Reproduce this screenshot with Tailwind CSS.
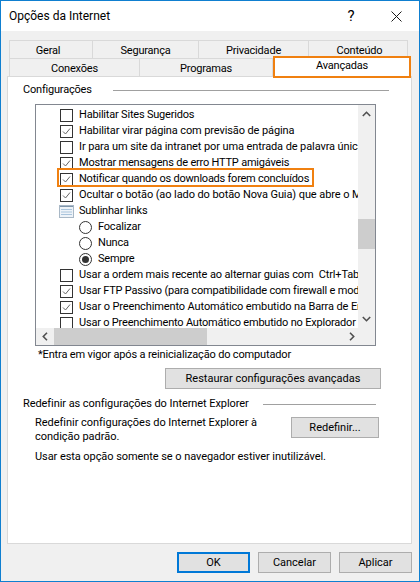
<!DOCTYPE html>
<html lang="pt-BR">
<head>
<meta charset="UTF-8">
<title>Opções da Internet</title>
<script src="https://cdn.jsdelivr.net/npm/@tailwindcss/browser@4"></script>
</head>
<body class="bg-white">
<div class="w-[420px] h-[582px] border border-[#0f7fd0] bg-[#f0f0f0] flex flex-col relative overflow-hidden font-['Roboto',sans-serif] text-[11px] leading-[16px] tracking-[-0.2px] text-black">

  <!-- title bar -->
  <div class="h-[30px] shrink-0 bg-white flex items-center pl-[8px]">
    <span class="flex-1 text-[12px] tracking-normal">Opções da Internet</span>
    <span class="w-[46px] text-center text-[15px]">?</span>
    <svg class="mr-[17px] ml-[17px]" width="11" height="11" viewBox="0 0 11 11"><path d="M.5.5l10 10M10.5.5l-10 10" stroke="#1a1a1a" fill="none"/></svg>
  </div>

  <!-- tabs -->
  <div class="ml-[8px] mt-[9px] w-[401px] h-[18px] flex text-center">
    <div class="w-[84px] pr-[6px] border border-b-0 border-[#d9d9d9] leading-[19px]">Geral</div>
    <div class="w-[106px] border border-b-0 border-l-0 border-[#d9d9d9] leading-[19px]">Segurança</div>
    <div class="w-[110px] border border-b-0 border-l-0 border-[#d9d9d9] leading-[19px]">Privacidade</div>
    <div class="w-[99px] pl-[3px] border border-b-0 border-l-0 border-[#d9d9d9] leading-[19px]">Conteúdo</div>
  </div>
  <div class="ml-[8px] w-[402px] h-[18px] flex text-center">
    <div class="w-[131px] border border-b-0 border-[#d9d9d9] leading-[19px]">Conexões</div>
    <div class="w-[133px] border border-b-0 border-l-0 border-[#d9d9d9] leading-[19px]">Programas</div>
    <div class="w-[138px] bg-white leading-[16px] relative z-10">Avançadas</div>
  </div>

  <!-- panel -->
  <div class="ml-[6px] w-[405px] h-[468px] bg-white border border-[#d9d9d9] relative">
    <div class="flex items-center h-[16px] mt-[5px] pl-[15px]">
      <span class="w-[70px] whitespace-nowrap">Configurações</span>
      <div class="ml-[20px] w-[276px] h-px bg-[#a0a0a0]"></div>
    </div>

    <!-- listbox -->
    <div class="ml-[27px] mt-[6px] w-[341px] h-[242px] border border-[#828790] relative overflow-hidden">
      <div class="w-[322px] h-[223px] pt-[2px] overflow-hidden whitespace-nowrap">
        <div class="h-[16px] flex items-center pl-[24px]"><span class="w-[13px] h-[13px] shrink-0 border border-[#333] mr-[6px]"></span>Habilitar Sites Sugeridos</div>
        <div class="h-[16px] flex items-center pl-[24px] tracking-[-0.11px]"><span class="w-[13px] h-[13px] shrink-0 border border-[#333] mr-[6px]"><svg width="11" height="11" viewBox="0 0 11 11"><path d="M2 5.5l2.5 2.5L9 2.5" stroke="#666" fill="none"/></svg></span>Habilitar virar página com previsão de página</div>
        <div class="h-[16px] flex items-center pl-[24px] tracking-[-0.1px]"><span class="w-[13px] h-[13px] shrink-0 border border-[#333] mr-[6px]"></span>Ir para um site da intranet por uma entrada de palavra única na Barra</div>
        <div class="h-[16px] flex items-center pl-[24px]"><span class="w-[13px] h-[13px] shrink-0 border border-[#333] mr-[6px]"><svg width="11" height="11" viewBox="0 0 11 11"><path d="M2 5.5l2.5 2.5L9 2.5" stroke="#666" fill="none"/></svg></span>Mostrar mensagens de erro HTTP amigáveis</div>
        <div class="h-[16px] flex items-center pl-[24px] tracking-[-0.24px]"><span class="w-[13px] h-[13px] shrink-0 border border-[#333] mr-[6px]"><svg width="11" height="11" viewBox="0 0 11 11"><path d="M2 5.5l2.5 2.5L9 2.5" stroke="#666" fill="none"/></svg></span>Notificar quando os downloads forem concluídos</div>
        <div class="h-[16px] flex items-center pl-[24px] tracking-[-0.09px]"><span class="w-[13px] h-[13px] shrink-0 border border-[#333] mr-[6px]"><svg width="11" height="11" viewBox="0 0 11 11"><path d="M2 5.5l2.5 2.5L9 2.5" stroke="#666" fill="none"/></svg></span>Ocultar o botão (ao lado do botão Nova Guia) que abre o Microsoft Edge</div>
        <div class="h-[16px] flex items-center pl-[23px]">
          <svg class="mr-[5px] shrink-0" width="15" height="13" viewBox="0 0 15 13"><rect x=".5" y=".5" width="14" height="12" fill="#eef3f8" stroke="#a9b8c6"/><path d="M1 1.5h13" stroke="#7f96ab"/><path d="M2 4.5h11M2 7h11M2 9.5h11" stroke="#a9c4dc"/></svg>Sublinhar links
        </div>
        <div class="h-[16px] flex items-center pl-[43px]"><span class="w-[13px] h-[13px] shrink-0 rounded-full border border-[#333] mr-[6px]"></span>Focalizar</div>
        <div class="h-[16px] flex items-center pl-[43px]"><span class="w-[13px] h-[13px] shrink-0 rounded-full border border-[#333] mr-[6px]"></span>Nunca</div>
        <div class="h-[16px] flex items-center pl-[43px]"><span class="w-[13px] h-[13px] shrink-0 rounded-full border border-[#333] mr-[6px] flex items-center justify-center"><span class="w-[7px] h-[7px] rounded-full bg-[#333]"></span></span>Sempre</div>
        <div class="h-[16px] flex items-center pl-[24px] tracking-[-0.13px]"><span class="w-[13px] h-[13px] shrink-0 border border-[#333] mr-[6px]"></span>Usar a ordem mais recente ao alternar guias com&nbsp; Ctrl+Tab</div>
        <div class="h-[16px] flex items-center pl-[24px]"><span class="w-[13px] h-[13px] shrink-0 border border-[#333] mr-[6px]"><svg width="11" height="11" viewBox="0 0 11 11"><path d="M2 5.5l2.5 2.5L9 2.5" stroke="#666" fill="none"/></svg></span>Usar FTP Passivo (para compatibilidade com firewall e modems DSL)</div>
        <div class="h-[16px] flex items-center pl-[24px] tracking-[-0.12px]"><span class="w-[13px] h-[13px] shrink-0 border border-[#333] mr-[6px]"><svg width="11" height="11" viewBox="0 0 11 11"><path d="M2 5.5l2.5 2.5L9 2.5" stroke="#666" fill="none"/></svg></span>Usar o Preenchimento Automático embutido na Barra de Endereços</div>
        <div class="h-[16px] flex items-center pl-[24px]"><span class="w-[13px] h-[13px] shrink-0 border border-[#333] mr-[6px]"></span>Usar o Preenchimento Automático embutido no Explorador de Arquivos</div>
      </div>

      <!-- vertical scrollbar -->
      <div class="absolute right-0 top-0 w-[17px] h-[223px] bg-[#f0f0f0] flex flex-col items-center">
        <svg class="mt-[6px]" width="9" height="6" viewBox="0 0 9 6"><path d="M.8 5L4.5 1.3 8.2 5" stroke="#505050" stroke-width="1.6" fill="none"/></svg>
        <div class="mt-[102px] w-full h-[30px] bg-[#cdcdcd]"></div>
        <svg class="mt-[67px]" width="9" height="6" viewBox="0 0 9 6"><path d="M.8 1L4.5 4.7 8.2 1" stroke="#505050" stroke-width="1.6" fill="none"/></svg>
      </div>
      <!-- horizontal scrollbar -->
      <div class="h-[17px] bg-[#f0f0f0] flex items-center">
        <svg class="ml-[6px]" width="6" height="9" viewBox="0 0 6 9"><path d="M5 .8L1.3 4.5 5 8.2" stroke="#505050" stroke-width="1.6" fill="none"/></svg>
        <div class="ml-[6px] w-[153px] h-full bg-[#cdcdcd]"></div>
        <svg class="ml-[142px]" width="6" height="9" viewBox="0 0 6 9"><path d="M1 .8L4.7 4.5 1 8.2" stroke="#505050" stroke-width="1.6" fill="none"/></svg>
      </div>
    </div>

    <div class="pl-[30px] mt-[1px] tracking-[-0.16px]">*Entra em vigor após a reinicialização do computador</div>
    <div class="flex justify-end pr-[30px] mt-[5px]">
      <button class="w-[216px] h-[21px] bg-[#e1e1e1] border border-[#adadad] tracking-normal">Restaurar configurações avançadas</button>
    </div>

    <div class="flex items-center h-[16px] mt-[7px] pl-[15px]">
      <span class="w-[228px] whitespace-nowrap tracking-[-0.07px]">Redefinir as configurações do Internet Explorer</span>
      <div class="ml-[12px] w-[113px] h-px bg-[#a0a0a0]"></div>
    </div>
    <div class="flex mt-[2px] pl-[27px] pr-[32px] justify-between">
      <div class="pt-[2px] leading-[14px] tracking-[-0.03px]">Redefinir configurações do Internet Explorer à<br>condição padrão.</div>
      <button class="w-[88px] h-[21px] mt-[3px] bg-[#e1e1e1] border border-[#adadad] tracking-normal">Redefinir...</button>
    </div>
    <div class="pl-[27px] mt-[5px] tracking-[-0.07px]">Usar esta opção somente se o navegador estiver inutilizável.</div>

    <!-- highlight on the row -->
    <div class="absolute left-[49px] top-[91px] w-[257px] h-[19px] border-2 border-[#f08010]"></div>
  </div>

  <!-- tab highlight -->
  <div class="absolute left-[272px] top-[55px] w-[138px] h-[22px] border-2 border-[#f08010] z-20"></div>

  <!-- footer buttons -->
  <div class="flex justify-end gap-[8px] pr-[7px] mt-[8px] tracking-normal">
    <button class="w-[73px] h-[21px] bg-[#e1e1e1] border-2 border-[#0078d7]">OK</button>
    <button class="w-[73px] h-[21px] bg-[#e1e1e1] border border-[#adadad]">Cancelar</button>
    <button class="w-[73px] h-[21px] bg-[#e1e1e1] border border-[#adadad]">Aplicar</button>
  </div>
</div>
</body>
</html>
